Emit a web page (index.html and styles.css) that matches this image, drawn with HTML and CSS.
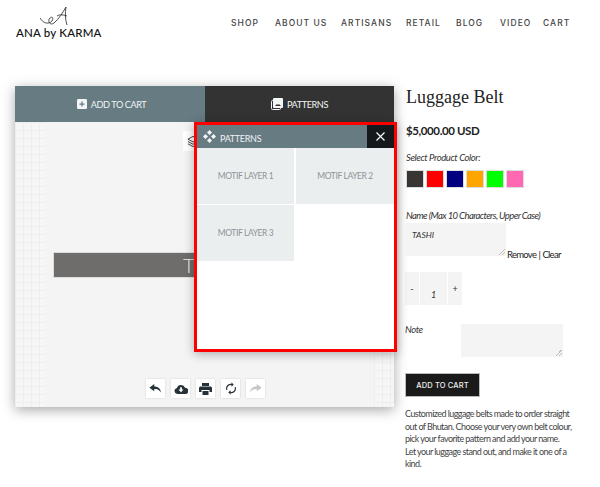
FILE: index.html
```html
<!DOCTYPE html>
<html lang="en">
<head>
<meta charset="utf-8">
<title>Luggage Belt</title>
<link rel="stylesheet" href="styles.css">
</head>
<body>
<header class="site-header">
  <a class="logo">
    <svg class="logo-mark" width="28" height="20" viewBox="0 0 28 20" fill="none" stroke="#222" stroke-width=".8">
      <path d="M0 12C3 17 8 19 12 15C14 12 12 10 10 12C7 15 10 20 14 17C19 13 23 6 26 1C25 7 25 13 27 19"/>
      <path d="M17 10C20 8 24 9 27 10"/>
    </svg>
    <span class="logo-text">ANA by KARMA</span>
  </a>
  <nav class="nav">
    <a class="nav-shop">SHOP</a><a class="nav-about">ABOUT US</a><a class="nav-artisans">ARTISANS</a><a class="nav-retail">RETAIL</a><a class="nav-blog">BLOG</a><a class="nav-video">VIDEO</a><a>CART</a>
  </nav>
</header>
<main class="product">
  <section class="designer">
    <div class="tabs">
      <div class="tab tab-cart">
        <svg width="10" height="10" viewBox="0 0 12 12"><rect width="12" height="12" rx="1.5" fill="#f3f6f7"/><path d="M6 3v6M3 6h6" stroke="#677b83" stroke-width="1.5"/></svg>
        ADD TO CART
      </div>
      <div class="tab tab-patterns">
        <svg width="12" height="12" viewBox="0 0 12 12"><rect x="0.500" y="2.500" width="9" height="9" rx="1" fill="none" stroke="#f3f6f7"/><rect x="2" y="0" width="10" height="10" rx="1" fill="#f3f6f7"/><path d="M4 8l2-2 1 1 1-1 2 2z" fill="#333"/></svg>
        PATTERNS
      </div>
    </div>
    <div class="canvas">
      <div class="grid-strip"></div>
      <div class="stage">
        <div class="layers-btn">
          <svg width="12" height="13" viewBox="0 0 13 13" fill="none" stroke="#333"><path d="M6.500 1L12 4 6.500 7 1 4zM1 6.500l5.500 3 5.500-3M1 9l5.500 3L12 9"/></svg>
        </div>
        <div class="belt"><span class="belt-text">T</span></div>
        <div class="tools">
          <button class="tool"><svg width="13" height="9" viewBox="0 0 15 11"><path d="M6 0L0 4.500 6 9V6c3 0 6 .5 8 4.500C14 6 11 3 6 3z" fill="#263238"/></svg></button>
          <button class="tool"><svg width="14" height="10" viewBox="0 0 15 11"><path d="M3.500 11a3.400 3.400 0 0 1-.5-6.700A4.800 4.800 0 0 1 12 4a3.500 3.500 0 0 1 0 7z" fill="#263238"/><path d="M6.500 3.500h2V6h1.800L7.500 9 4.700 6h1.800z" fill="#fff"/></svg></button>
          <button class="tool"><svg width="13" height="12" viewBox="0 0 13 12"><path d="M3 0h7v3H3zM1.500 3.500h10A1.500 1.500 0 0 1 13 5v4h-2.500V7h-8v2H0V5a1.500 1.500 0 0 1 1.500-1.500zM3.500 8h6v4h-6z" fill="#263238"/></svg></button>
          <button class="tool"><svg width="10" height="13" viewBox="0 0 11 14" fill="none" stroke="#263238" stroke-width="1.300"><path d="M1 8.500A4.500 4.500 0 0 1 7 2.800M10 5.500A4.500 4.500 0 0 1 4 11.200"/><path d="M6 0l2.500 2.800L6 5zM5 9l-2.500 2.200L5 14z" fill="#263238" stroke="none"/></svg></button>
          <button class="tool"><svg width="13" height="9" viewBox="0 0 15 11"><path d="M9 0l6 4.500L9 9V6c-3 0-6 .5-8 4.500C1 6 4 3 9 3z" fill="#c4c6c7"/></svg></button>
        </div>
      </div>
      <div class="grid-strip grid-strip-right"></div>
    </div>
    <aside class="popup">
      <div class="popup-head">
        <svg width="13" height="13" viewBox="0 0 13 13" fill="#f3f6f7"><path d="M6.500 0L9 2.500 6.500 5 4 2.500zM2.500 4L5 6.500 2.500 9 0 6.500zM10.500 4L13 6.500 10.500 9 8 6.500zM6.500 8L9 10.500 6.500 13 4 10.500z"/></svg>
        <span class="popup-title">PATTERNS</span>
        <span class="popup-close"><svg width="9" height="9" viewBox="0 0 9 9" stroke="#fff" stroke-width="1.100"><path d="M.5.500l8 8M8.500.500l-8 8"/></svg></span>
      </div>
      <div class="motifs">
        <div class="motif">MOTIF LAYER 1</div>
        <div class="motif">MOTIF LAYER 2</div>
        <div class="motif">MOTIF LAYER 3</div>
      </div>
    </aside>
  </section>
  <section class="details">
    <h1 class="title">Luggage Belt</h1>
    <p class="price">$5,000.00 USD</p>
    <p class="label label-color">Select Product Color:</p>
    <div class="swatches">
      <span class="swatch swatch-charcoal"></span><span class="swatch swatch-red"></span><span class="swatch swatch-navy"></span><span class="swatch swatch-orange"></span><span class="swatch swatch-lime"></span><span class="swatch swatch-pink"></span>
    </div>
    <p class="label label-name">Name (Max 10 Characters, Upper Case)</p>
    <div class="name-row">
      <div class="field field-name">TASHI<i class="grip"></i></div>
      <span class="name-links">Remove | Clear</span>
    </div>
    <div class="qty">
      <span class="qty-btn">-</span><span class="qty-val">1</span><span class="qty-btn">+</span>
    </div>
    <div class="note-row">
      <span class="label note-label">Note</span>
      <div class="field field-note"><i class="grip"></i></div>
    </div>
    <button class="buy">ADD TO CART</button>
    <p class="desc">Customized luggage belts made to order straight<br>out of Bhutan. Choose your very own belt colour,<br>pick your favorite pattern and add your name.<br>Let your luggage stand out, and make it one of a<br>kind.</p>
  </section>
</main>
</body>
</html>
```
FILE: styles.css
```css
* { box-sizing: border-box; }
html, body { margin: 0; height: 487px; overflow: hidden; }
body { background: #fff; font-family: Lato, "Liberation Sans", sans-serif; color: #333; }
p, h1 { margin: 0; }

.site-header { height: 86px; display: flex; align-items: flex-start; padding-left: 16px; }
.logo { width: 215px; padding-top: 6px; display: flex; flex-direction: column; }
.logo-mark { margin-left: 24px; }
.logo-text { font-size: 11.500px; line-height: 14px; color: #111; letter-spacing: .2px; font-weight: 500; }
.nav { display: flex; padding-top: 18px; font-family: Inter, sans-serif; font-size: 8.500px; line-height: 11px; letter-spacing: 1.050px; color: #444; font-weight: 500; white-space: nowrap; }
.nav a { display: block; }
.nav-shop { width: 44px; }
.nav-about { width: 66px; }
.nav-artisans { width: 65px; }
.nav-retail { width: 50px; }
.nav-blog { width: 44px; }
.nav-video { width: 43px; }

.product { display: flex; align-items: flex-start; padding-left: 15px; }
.designer { position: relative; width: 379px; height: 321px; box-shadow: 0 3px 12px rgba(0,0,0,.35); margin-right: 11px; flex: none; }
.tabs { display: flex; height: 36px; }
.tab { display: flex; align-items: center; justify-content: center; gap: 4px; color: #f0f3f4; font-size: 9.200px; letter-spacing: -.45px; }
.tab-cart { flex: 0 0 190px; background: #677b83; padding-left: 3px; }
.tab-patterns { flex: 1; background: #333; }
.canvas { display: flex; height: 285px; background: #f4f4f4; }
.grid-strip { width: 30px; background-color: #f6f6f6; background-image: linear-gradient(#eee 1px, transparent 1px), linear-gradient(90deg, #eee 1px, transparent 1px); background-size: 8px 8px; }
.grid-strip-right { width: 20px; }
.stage { flex: 1; position: relative; }
.layers-btn { position: absolute; left: 138px; top: 9px; width: 20px; height: 20px; background: #fff; display: flex; align-items: center; justify-content: center; }
.belt { position: absolute; left: 8px; top: 130px; width: 300px; height: 26px; background: #6e6d6b; border: 1px solid #ddd; border-right: 0; color: #eee; font-size: 20px; line-height: 24px; }
.belt-text { display: block; padding-left: 129px; font-weight: 300; }
.tools { position: absolute; left: 101px; bottom: 9px; display: flex; gap: 6px; }
.tool { width: 19px; height: 19px; padding: 0; border: 0; background: #fff; box-shadow: 0 0 2px rgba(0,0,0,.15); display: flex; align-items: center; justify-content: center; }

.popup { position: absolute; left: 179px; top: 36px; width: 203px; height: 230px; background: #fff; border: 3px solid #f00; box-shadow: 0 2px 10px rgba(0,0,0,.3); }
.popup-head { height: 23px; background: #677b83; display: flex; align-items: center; padding-left: 6px; gap: 4px; color: #eef1f2; font-size: 9px; letter-spacing: -.3px; }
.popup-title { flex: 1; padding-top: 3px; }
.popup-close { width: 27px; height: 23px; background: #16191b; display: flex; align-items: center; justify-content: center; }
.motifs { display: grid; grid-template-columns: 97px 98px; gap: 1px 2px; }
.motif { height: 56px; background: #ebeeef; color: #8b9497; font-size: 8.500px; letter-spacing: -.4px; display: flex; align-items: center; justify-content: center; }

.details { width: 172px; flex: none; padding-top: 1px; }
.title { font-family: "Liberation Serif", serif; font-weight: 400; font-size: 18px; line-height: 20px; color: #222; margin-left: 1px; }
.price { margin-top: 17px; margin-left: 1px; font-size: 11.500px; line-height: 14px; font-weight: 700; letter-spacing: -.4px; color: #222; }
.label { font-size: 9.500px; font-style: italic; line-height: 12px; letter-spacing: -.4px; color: #333; }
.label-color { margin-top: 14px; margin-left: 1px; }
.swatches { display: flex; gap: 2px; margin-top: 6px; margin-left: 1px; }
.swatch { width: 18px; height: 18px; border: 1px solid #ddd; }
.swatch-charcoal { background: #383533; }
.swatch-red { background: #f00; }
.swatch-navy { background: #000080; }
.swatch-orange { background: #ffa500; }
.swatch-lime { background: #0f0; }
.swatch-pink { background: #ff69b4; }
.label-name { margin-top: 22px; margin-left: 1px; letter-spacing: -.6px; }
.name-row { display: flex; align-items: flex-end; margin-top: 1px; }
.field { position: relative; background: #f4f4f4; flex: none; }
.field-name { width: 101px; height: 33px; padding: 6px 7px; font-size: 8.500px; font-style: italic; line-height: 12px; }
.name-links { font-size: 9.500px; line-height: 12px; letter-spacing: -.72px; word-spacing: .6px; color: #222; margin-left: 1px; margin-bottom: -5px; white-space: nowrap; }
.grip { position: absolute; right: 1px; bottom: 1px; width: 7px; height: 7px; background: linear-gradient(135deg, transparent 50%, #bbb 50%, #bbb 60%, transparent 60%, transparent 75%, #bbb 75%, #bbb 85%, transparent 85%); }
.qty { display: flex; gap: 1px; margin-top: 16px; height: 33px; }
.qty-btn, .qty-val { background: #f4f4f4; display: flex; justify-content: center; font-size: 9px; }
.qty-btn { width: 14px; align-items: center; }
.qty-val { width: 27px; align-items: flex-end; padding-bottom: 5px; font-style: italic; }
.note-row { display: flex; margin-top: 19px; height: 33px; }
.note-label { width: 56px; }
.field-note { width: 102px; height: 33px; }
.buy { display: block; margin-top: 16px; width: 75px; height: 24px; padding: 0; border: 1px solid #bbb; background: #1a1a1a; color: #eee; font-family: Inter, sans-serif; font-size: 7.500px; letter-spacing: .15px; font-weight: 500; }
.desc { margin-top: 11px; white-space: nowrap; font-size: 9px; line-height: 12.500px; letter-spacing: -.56px; color: #444; }
```
